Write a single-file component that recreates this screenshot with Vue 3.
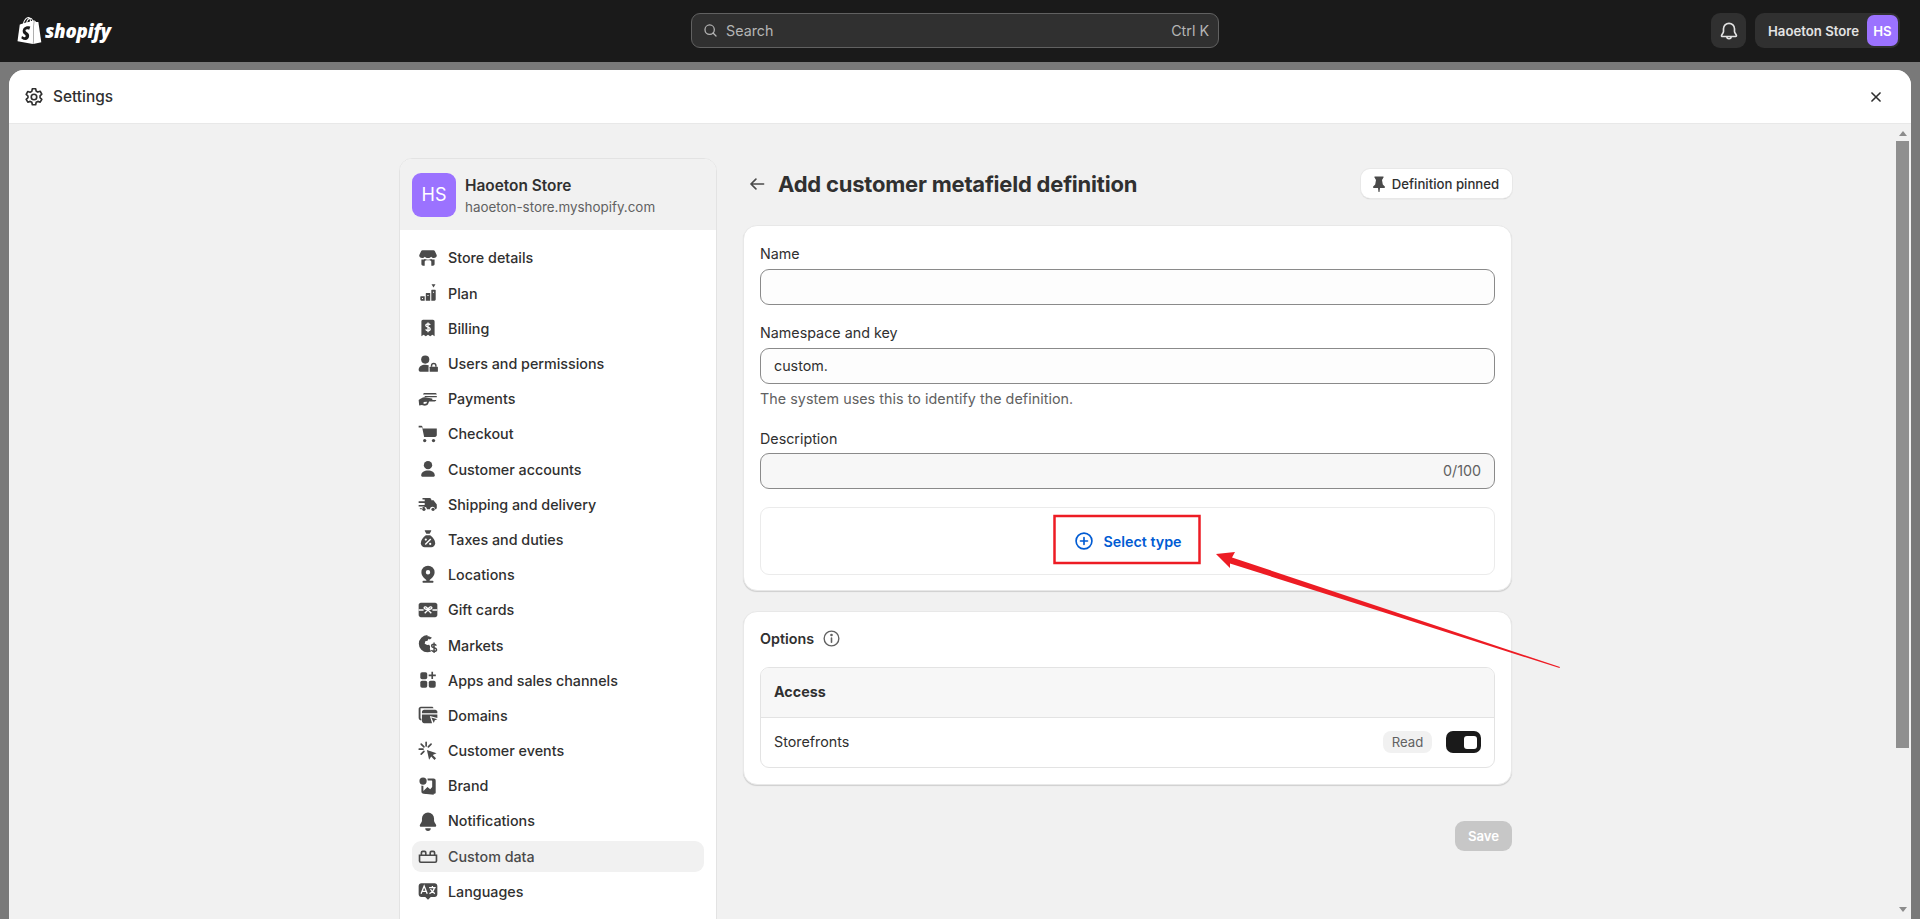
<script setup>
const navItems = [
  { label: 'Store details', icon: '<path d="M5 3h10c.6 0 1 .3 1.300.8L18 7.500c0 1.500-1.100 2.500-2.700 2.500-1 0-1.900-.5-2.400-1.200-.6.7-1.600 1.200-2.900 1.200s-2.300-.5-2.900-1.200C6.600 9.500 5.700 10 4.700 10 3.100 10 2 9 2 7.500l1.700-3.700C4 3.300 4.400 3 5 3z"/><path d="M4 11.300c1.100.3 2.300.1 3.100-.5.900.5 1.900.7 2.900.7s2-.2 2.900-.7c.8.600 2 .8 3.100.5v4.200c0 .8-.7 1.500-1.500 1.500H13v-3.500c0-.8-.7-1.500-1.500-1.500h-3c-.8 0-1.500.7-1.500 1.500V17H5.500C4.700 17 4 16.300 4 15.500z"/>' },
  { label: 'Plan', icon: '<path fill-rule="evenodd" d="M3 13.500c0-.3.200-.5.500-.5H7v4H4a1 1 0 0 1-1-1zM4.500 14.500v1h1v-1z"/><path fill-rule="evenodd" d="M8 10.500c0-.3.200-.5.500-.5H12v7H8zM9.500 11.800v1h1v-1z"/><path fill-rule="evenodd" d="M13 7.500c0-.3.200-.5.500-.5h3c.3 0 .5.200.5.500V16a1 1 0 0 1-1 1h-3zM14.500 8.800v1h1v-1z"/><path d="M13.200 2h3.600L15 5z"/>' },
  { label: 'Billing', icon: '<path d="M5.500 2.500h9c.8 0 1.500.7 1.500 1.500v13.500l-2-1.300-2 1.300-2-1.300-2 1.300-2-1.300-2 1.300V4c0-.8.700-1.500 1.500-1.500z"/><path d="M12 7.300c-.4-.7-1.100-1-2-1-1.200 0-2 .6-2 1.500 0 2 4 1 4 3.100 0 .9-.8 1.500-2 1.500-1 0-1.700-.4-2.100-1.100M10 5v8.800" fill="none" stroke="#fff" stroke-width="1.200"/>' },
  { label: 'Users and permissions', icon: '<circle cx="7.500" cy="6" r="3.700"/><path d="M1.500 15.500c0-3.300 2.700-4.800 6-4.800 1.300 0 2.400.2 3.300.7-.2.400-.3.800-.3 1.200v4.400H3a1.500 1.500 0 0 1-1.500-1.500z"/><path d="M12 12.500h6.500c.3 0 .5.200.5.500v3.500c0 .3-.2.500-.5.500H12c-.3 0-.5-.2-.5-.5V13c0-.3.200-.5.500-.5z"/><path d="M13.200 12.500v-1a2 2 0 0 1 4 0v1" fill="none" stroke="currentColor" stroke-width="1.300"/>' },
  { label: 'Payments', icon: '<path d="M7 4.500h9.500c.8 0 1.500.6 1.500 1.300H5.500C5.500 5 6.200 4.500 7 4.500z"/><path d="M7 7.200h11v1.300H12l-5-.4z"/><path d="M1.500 11c2-1.500 4-3 6-2.500l6 1c.8.200.8 1.300 0 1.400H9.500l8 .1c0 .8-.7 1.300-1.500 1.300h-5l-1 2.500c-.5 1-2.500 1.500-4 1.200l-1.500-.5-2.500.500z" /><path d="M6 12.800l3.200-.3-.7 1.700-2.500.4z" fill="#fff"/>' },
  { label: 'Checkout', icon: '<path d="M1.500 2.500h2c.8 0 1.400.5 1.500 1.200L5.200 5H18v6c0 1-.7 1.700-1.700 1.700H6.500L4.800 4.500c0-.3-.2-.4-.5-.4H1.500z"/><circle cx="7" cy="16" r="1.500"/><circle cx="15" cy="16" r="1.500"/>' },
  { label: 'Customer accounts', icon: '<circle cx="10" cy="6.500" r="3.800"/><path d="M3.800 16c0-3.300 2.800-4.700 6.200-4.700s6.200 1.400 6.200 4.700c0 .6-.4 1-1 1H4.800c-.6 0-1-.4-1-1z"/>' },
  { label: 'Shipping and delivery', icon: '<path d="M5 4.500h6.500c.8 0 1.500.7 1.500 1.500v.5h2l3 4v3c0 .8-.5 1.300-1.200 1.300h-.4a2.300 2.300 0 0 0-4.600 0h-2.800a2.300 2.300 0 0 0-4.600 0H3.500c-.5 0-1-.4-1-1H7v-1.500H1.500v-1.500H7V9H1.500V7.500H7V6H5z"/><circle cx="6.300" cy="14.800" r="1.500"/><circle cx="14.600" cy="14.800" r="1.500"/>' },
  { label: 'Taxes and duties', icon: '<path d="M7.500 2h5c.4 0 .6.400.4.800L11.500 5.300h-3L7.100 2.800c-.2-.4 0-.8.400-.8z"/><path d="M8 6.500h4c2.700 2 4.500 4.500 4.500 7.300 0 2-1.500 3.700-3.500 3.700H7c-2 0-3.500-1.700-3.500-3.700 0-2.800 1.800-5.300 4.500-7.300z"/><path d="M7.500 15l5-5" stroke="#fff" stroke-width="1.300"/><circle cx="8" cy="10.500" r="1" fill="#fff"/><circle cx="12" cy="14.500" r="1" fill="#fff"/>' },
  { label: 'Locations', icon: '<path fill-rule="evenodd" d="M10 1.500a6 6 0 0 1 6 6c0 3-2.500 5.600-4.500 7v.8h2.700c.5 0 .8.400.8.800s-.3.900-.8.900H5.800c-.5 0-.8-.4-.8-.9s.3-.8.800-.8h2.700v-.8c-2-1.400-4.500-4-4.500-7a6 6 0 0 1 6-6zm0 4a2 2 0 1 0 0 4 2 2 0 0 0 0-4z"/>' },
  { label: 'Gift cards', icon: '<path d="M3.500 3.500h13c1.100 0 2 .9 2 2v9c0 1.100-.9 2-2 2h-13c-1.100 0-2-.9-2-2v-9c0-1.100.9-2 2-2z"/><path d="M10 9.500C9 7 6.500 6.500 6.500 8c0 1.300 1.700 1.500 3.500 1.500zm0 0c1-2.500 3.500-3 3.500-1.500 0 1.300-1.700 1.500-3.500 1.500zm0 .5l-3 3m3-3l3 3M1.500 10h4.500m8 0h4.500" fill="none" stroke="#fff" stroke-width="1.200"/>' },
  { label: 'Markets', icon: '<path d="M9.500 2c1.500 0 3 .5 4.100 1.400l-1.900 1.500-1.200-.6-.9 1.800-2.100.6-.5 2.100 2.300 1.200 1.700-.2.900 1.300-.2 2.500 1.100 2.400c-1 .5-2.100.7-3.300.7a7.800 7.800 0 0 1 0-15.700z"/><path d="M17.800 7.200c-.5-.8-1.200-1.200-2.200-1.200-1.300 0-2.100.6-2.100 1.600 0 2.100 4.500 1.200 4.500 3.400 0 1-1 1.600-2.300 1.600-1.100 0-1.900-.4-2.400-1.200M15.700 4.500v9.500" transform="translate(-.2 3.300)" fill="none" stroke="currentColor" stroke-width="1.300"/>' },
  { label: 'Apps and sales channels', icon: '<rect x="3" y="3" width="6.300" height="6.300" rx="1.600"/><rect x="3" y="10.700" width="6.300" height="6.300" rx="1.600"/><rect x="10.700" y="10.700" width="6.300" height="6.300" rx="1.600"/><path d="M13.100 2.500h1.500v2.500h2.500v1.500h-2.500v2.500h-1.500V6.500h-2.500V5h2.500z"/>' },
  { label: 'Domains', icon: '<path d="M3.500 2.500h10c.8 0 1.500.6 1.500 1.300H3.200v8.700c0 .6.300 1 .8 1V15c-1.300 0-2.500-1-2.500-2.500V4.500c0-1.100.9-2 2-2z"/><path d="M6.500 5.200h10c1.100 0 2 .9 2 2v1.300H4.500V7.200c0-1.100.9-2 2-2z"/><path d="M4.500 9.500h14v3.200l-6.800-1.800 2 6.600H6.500c-1.100 0-2-.9-2-2z"/><path d="M13 12.300l5.500 1.500-2.300 1 -.9 2.400z"/>' },
  { label: 'Customer events', icon: '<path d="M9 9l8.800 3-3.500 1.700 3 3-1.400 1.400-3-3L11 18z"/><path d="M8.300 2v3.500M2 8.300h3.500M3.800 3.800l2.500 2.500M3.800 12.800l2.500-2.500M12.800 3.800l-2.500 2.500" fill="none" stroke="currentColor" stroke-width="1.500" stroke-linecap="round"/>' },
  { label: 'Brand', icon: '<circle cx="5.500" cy="5.500" r="3.300"/><path d="M9.500 3.200h5.500c1.200 0 2 .8 2 2v10.600c0 .7-.5 1.200-1.200 1.200H6c-1.200 0-2-.8-2-2V9.500c1 .3 1.300.3 1.800.3v4.800l3.700-3.700 2.500 2 1.800-2v-5.300c0-.3-.2-.5-.5-.5H9.800z" /><path d="M6.500 17l3.500-4 3 2.500 1.500-2 .7.700V18z"/>' },
  { label: 'Notifications', icon: '<path d="M10 2.200a5.500 5.500 0 0 1 5.500 5.500v2.100c0 1.500 2 3 2 4.400 0 .7-.5 1.100-1.100 1.100H3.600c-.6 0-1.100-.4-1.100-1.100 0-1.400 2-2.900 2-4.400V7.700A5.500 5.500 0 0 1 10 2.200z"/><path d="M7.500 16.500h5a2.500 2.500 0 0 1-5 0z"/>' },
  { label: 'Custom data', active: true, icon: '<path fill="none" stroke="currentColor" stroke-width="1.500" d="M2.300 9.300h15.400v5.200c0 .8-.6 1.200-1.200 1.200h-13c-.6 0-1.200-.4-1.200-1.200zM4 9.300V7c0-.7.400-1.200 1.200-1.200h1.600c.8 0 1.200.5 1.200 1.200v2.300m4 0V7c0-.7.400-1.200 1.200-1.200h1.600c.8 0 1.200.5 1.200 1.200v2.300"/>' },
  { label: 'Languages', icon: '<path d="M4 3h12c1.400 0 2.500 1.100 2.500 2.500V13c0 1.400-1.100 2.500-2.500 2.500h-3.500L10 18l-2.500-2.500H4c-1.400 0-2.500-1.100-2.500-2.500V5.500C1.500 4.100 2.600 3 4 3z"/><path d="M3.700 12.500l2.800-7 2.800 7M4.800 10.300h3.400M11 7h6M14 5.500V7m1.800 0c-.4 2.300-2.300 4.500-4.500 5.300m1-4c.7 1.800 2.200 3.300 4 4" fill="none" stroke="#fff" stroke-width="1.200"/>' }
]
</script>

<template>
  <div class="page">
    <header class="topbar">
      <div class="logo">
        <svg class="logo-bag" viewBox="0 0 24 24" fill="#fff"><path d="M15.337 23.979l7.216-1.561s-2.604-17.613-2.625-17.73c-.018-.116-.114-.192-.211-.192s-1.929-.136-1.929-.136-1.275-1.274-1.439-1.411c-.045-.037-.075-.057-.121-.074l-.914 21.104h.023zM11.71 11.305s-.81-.424-1.774-.424c-1.447 0-1.504.906-1.504 1.141 0 1.232 3.24 1.715 3.24 4.629 0 2.295-1.44 3.76-3.406 3.76-2.354 0-3.54-1.465-3.54-1.465l.646-2.086s1.245 1.066 2.28 1.066c.675 0 .975-.545.975-.932 0-1.619-2.654-1.694-2.654-4.359-.034-2.237 1.571-4.416 4.827-4.416 1.257 0 1.875.361 1.875.361l-.945 2.715-.02.01zM11.17.83c.136 0 .271.038.405.135-.984.465-2.064 1.639-2.508 3.992-.656.213-1.293.405-1.889.578C7.697 3.75 8.951.84 11.17.84V.83zm1.235 2.949v.135c-.754.232-1.583.484-2.394.736.466-1.777 1.333-2.645 2.085-2.971.193.501.309 1.176.309 2.1zm.539-2.234c.694.074 1.141.867 1.429 1.755-.349.114-.735.231-1.158.366v-.252c0-.752-.096-1.371-.271-1.871v.002zm2.992 1.289c-.02 0-.06.021-.078.021s-.289.075-.714.21c-.423-1.233-1.176-2.37-2.508-2.37h-.115C12.135.209 11.669 0 11.265 0 8.159 0 6.675 3.877 6.21 5.846c-1.194.365-2.063.636-2.16.674-.675.213-.694.232-.772.87-.075.462-1.83 14.063-1.83 14.063L15.009 24l.927-21.166z"/></svg>
        <span class="logo-word">shopify</span>
      </div>
      <div class="search">
        <svg class="search-icon" viewBox="0 0 20 20" fill="none" stroke="currentColor" stroke-width="1.500" stroke-linecap="round"><circle cx="9" cy="9" r="5.500"/><path d="M13 13l3.500 3.500"/></svg>
        <span class="search-text">Search</span>
        <span class="search-keys">Ctrl K</span>
      </div>
      <div class="top-actions">
        <button class="bell">
          <svg viewBox="0 0 20 20" fill="none" stroke="currentColor" stroke-width="1.500" stroke-linejoin="round"><path d="M10 3a5 5 0 0 1 5 5v2.500c0 1.300 1.800 2.700 1.800 3.900 0 .4-.3.600-.7.600H3.900c-.4 0-.7-.2-.7-.6 0-1.200 1.800-2.600 1.800-3.900V8a5 5 0 0 1 5-5z"/><path d="M8 15a2 2 0 0 0 4 0"/></svg>
        </button>
        <div class="store-btn">
          <span>Haoeton Store</span>
          <span class="store-avatar">HS</span>
        </div>
      </div>
    </header>

    <div class="backdrop">
      <div class="modal">
        <div class="modal-head">
          <svg class="gear" viewBox="0 0 20 20" fill="none" stroke="currentColor" stroke-width="1.500" stroke-linejoin="round"><circle cx="10" cy="10" r="2.500"/><path d="M8.500 2.500h3l.5 2.200 1.500.8 2.100-.7 1.500 2.600-1.600 1.500v1.700l1.600 1.500-1.500 2.600-2.100-.7-1.500.8-.5 2.200h-3l-.5-2.200-1.500-.8-2.100.7-1.500-2.600 1.600-1.500V9.100L2.900 7.600l1.500-2.600 2.100.7 1.500-.8z"/></svg>
          <span class="modal-title">Settings</span>
          <svg class="close" viewBox="0 0 20 20" fill="none" stroke="currentColor" stroke-width="1.800" stroke-linecap="round"><path d="M5.500 5.500l9 9M14.500 5.500l-9 9"/></svg>
        </div>
        <div class="modal-body">
          <div class="content">
            <aside class="side">
              <div class="side-head">
                <span class="side-avatar">HS</span>
                <div class="side-names">
                  <div class="side-name">Haoeton Store</div>
                  <div class="side-domain">haoeton-store.myshopify.com</div>
                </div>
              </div>
              <nav class="nav">
                <a v-for="item in navItems" :key="item.label" class="nav-row" :class="{ active: item.active }">
                  <svg class="nav-icon" viewBox="0 0 20 20" fill="currentColor" v-html="item.icon"></svg>
                  <span>{{ item.label }}</span>
                </a>
              </nav>
            </aside>

            <main class="main">
              <div class="title-row">
                <svg class="back" viewBox="0 0 20 20" fill="none" stroke="currentColor" stroke-width="1.500" stroke-linecap="round" stroke-linejoin="round"><path d="M16 10H4.500M9 5.500L4.500 10 9 14.500"/></svg>
                <h1>Add customer metafield definition</h1>
                <button class="pin">
                  <svg viewBox="0 0 20 20" fill="currentColor"><path d="M6 2.500h8c.5 0 .8.600.5 1L13 6l.8 4.500 2 2c.4.500.1 1.500-.6 1.500H11l-.5 4h-1L9 14H4.800c-.7 0-1-1-.6-1.500l2-2L7 6 5.500 3.500c-.3-.4 0-1 .5-1z"/></svg>
                  Definition pinned
                </button>
              </div>

              <section class="card form-card">
                <label class="label">Name</label>
                <div class="input"></div>
                <label class="label gap">Namespace and key</label>
                <div class="input">custom.</div>
                <div class="help">The system uses this to identify the definition.</div>
                <label class="label gap desc-label">Description</label>
                <div class="input desc"><span>0/100</span></div>
                <div class="select-box">
                  <svg viewBox="0 0 20 20" fill="none" stroke="currentColor" stroke-width="1.500" stroke-linecap="round"><circle cx="10" cy="10" r="7.200"/><path d="M10 6.800v6.400M6.800 10h6.400"/></svg>
                  <span>Select type</span>
                </div>
              </section>

              <section class="card options-card">
                <div class="options-title">
                  <span>Options</span>
                  <svg viewBox="0 0 20 20" fill="none" stroke="currentColor" stroke-width="1.300" stroke-linecap="round"><circle cx="10" cy="10" r="7"/><path d="M10 9.500v4" stroke-width="1.500"/><circle cx="10" cy="6.700" r=".6" fill="currentColor"/></svg>
                </div>
                <div class="table">
                  <div class="table-head">Access</div>
                  <div class="table-row">
                    <span>Storefronts</span>
                    <span class="read">Read</span>
                    <span class="toggle"><i></i></span>
                  </div>
                </div>
              </section>

              <div class="save-row"><button class="save">Save</button></div>
            </main>
          </div>
          <div class="scrollbar">
            <i class="arrow up"></i>
            <b class="thumb"></b>
            <i class="arrow down"></i>
          </div>
        </div>
      </div>
    </div>

    <svg class="annotation" viewBox="0 0 1920 919" fill="#ed1c24">
      <rect x="1054.500" y="516" width="145" height="47" fill="none" stroke="#ed1c24" stroke-width="2.500"/>
      <polygon points="1216,554 1235,552 1232,557.500 1560,667 1559.500,668 1230,563.500 1230,568"/>
    </svg>
  </div>
</template>

<style>
html, body { margin: 0; padding: 0; background: #1a1a1a; overflow: hidden; }
</style>

<style scoped>
.page {
  position: relative;
  height: 919px;
  display: flex;
  flex-direction: column;
  overflow: hidden;
  font-family: Inter, "Liberation Sans", sans-serif;
  font-size: 14.3px;
  color: #303030;
}
.topbar {
  height: 62px;
  flex: none;
  box-sizing: border-box;
  background: #1a1a1a;
  display: flex;
  align-items: center;
  padding: 0 20px 1px 18px;
  position: relative;
}
.logo { display: flex; align-items: center; width: 673px; gap: 2px; flex: none; }
.logo-bag { width: 27px; height: 27px; margin-left: -2px; }
.logo-word {
  color: #fff;
  font-family: "Open Sans", sans-serif;
  font-weight: 800;
  font-style: italic;
  font-size: 18.700px;
  letter-spacing: -0.3px;
  line-height: 26px;
}
.search {
  width: 528px;
  height: 35px;
  box-sizing: border-box;
  border: 1px solid #616161;
  border-radius: 9px;
  background: #303030;
  color: #b5b5b5;
  display: flex;
  align-items: center;
  padding: 0 9px 0 10px;
  font-size: 14.3px;
}
.search-icon { width: 17px; height: 17px; margin-right: 7px; }
.search-text { flex: 1; }
.top-actions { margin-left: auto; display: flex; gap: 9px; align-items: center; }
.bell {
  width: 35px;
  height: 35px;
  padding: 0;
  border: 0;
  border-radius: 9px;
  background: #303030;
  color: #e3e3e3;
  display: flex;
  align-items: center;
  justify-content: center;
}
.bell svg { width: 22px; height: 22px; }
.store-btn {
  width: 145px;
  height: 35px;
  box-sizing: border-box;
  border-radius: 9px;
  background: #303030;
  color: #e3e3e3;
  font-size: 13.2px;
  font-weight: 600;
  display: flex;
  align-items: center;
  justify-content: space-between;
  padding: 0 2px 0 13px;
}
.store-avatar {
  width: 31px;
  height: 31px;
  border-radius: 7px;
  background: #9b72ff;
  color: #fff;
  display: flex;
  align-items: center;
  justify-content: center;
  font-size: 13.2px;
}
.backdrop {
  flex: 1;
  min-height: 0;
  background: #797979;
  padding: 8px 9px 0;
  display: flex;
}
.modal {
  flex: 1;
  min-width: 0;
  background: #f1f1f1;
  border-radius: 15px 15px 0 0;
  overflow: hidden;
  display: flex;
  flex-direction: column;
}
.modal-head {
  height: 54px;
  flex: none;
  box-sizing: border-box;
  background: #fff;
  border-bottom: 1px solid #e8e8e8;
  display: flex;
  align-items: center;
  padding: 0 26px 0 14px;
}
.gear { width: 22px; height: 22px; color: #303030; margin-right: 8px; }
.modal-title { font-size: 15.400px; font-weight: 500; flex: 1; }
.close { width: 18px; height: 18px; color: #303030; }
.modal-body { flex: 1; min-height: 0; display: flex; overflow: hidden; }
.content {
  flex: 1;
  min-width: 0;
  display: flex;
  justify-content: center;
  gap: 25px;
  padding-left: 8px;
  align-items: flex-start;
}
.side {
  width: 318px;
  flex: none;
  box-sizing: border-box;
  margin-top: 34px;
  background: #fff;
  border: 1px solid #e3e3e3;
  border-radius: 13px 13px 0 0;
  overflow: hidden;
  padding-bottom: 40px;
}
.side-head {
  height: 71px;
  background: #f1f1f1;
  display: flex;
  align-items: center;
  padding: 0 12px;
  gap: 9px;
}
.side-avatar {
  width: 44px;
  height: 44px;
  border-radius: 9px;
  background: #9b72ff;
  color: #fff;
  display: flex;
  align-items: center;
  justify-content: center;
  font-size: 18px;
}
.side-names { padding-top: 5px; }
.side-name { font-size: 15.400px; font-weight: 600; line-height: 20px; color: #303030; }
.side-domain { font-size: 13.400px; color: #616161; line-height: 22px; }
.nav {
  padding: 12.600px 12px 0;
  display: flex;
  flex-direction: column;
  gap: 4.400px;
}
.nav-row {
  height: 30.800px;
  border-radius: 9px;
  display: flex;
  align-items: center;
  gap: 9px;
  padding: 0 5px;
  font-weight: 500;
  color: #303030;
}
.nav-row.active { background: #f1f1f1; color: #4a4a4a; }
.nav-icon { width: 22px; height: 22px; flex: none; color: #4a4a4a; }
.main { width: 770px; flex: none; padding-top: 45px; }
.title-row { height: 29px; display: flex; align-items: center; margin-bottom: 27px; padding-left: 4px; }
.back { width: 22px; height: 22px; color: #4a4a4a; margin-right: 10px; }
h1 { margin: 0; flex: 1; font-size: 22px; font-weight: 650; color: #303030; letter-spacing: -0.22px; }
.pin {
  width: 151px;
  height: 29px;
  padding: 0 5px 0 0;
  border: 0;
  border-radius: 9px;
  background: #fff;
  box-shadow: 0 0 0 1px #e8e8e8, 0 1px 1px #b5b5b5;
  font: inherit;
  font-size: 13.200px;
  font-weight: 500;
  color: #303030;
  display: flex;
  align-items: center;
  justify-content: center;
  gap: 3px;
}
.pin svg { width: 20px; height: 20px; color: #4a4a4a; }
.card {
  box-sizing: border-box;
  background: #fff;
  border: 1px solid #e8e8e8;
  border-radius: 14px;
  box-shadow: 0 1px 1px rgba(0, 0, 0, .14);
  width: 769px;
  margin-left: 1px;
}
.form-card { padding: 18px 16px 16px; margin-bottom: 20px; height: 366px; }
.label { display: block; height: 20px; line-height: 20px; margin-bottom: 5px; color: #303030; font-weight: 400; }
.label.gap { margin-top: 18px; }
.label.desc-label { margin-top: 20px; margin-bottom: 4px; }
.input {
  height: 36px;
  box-sizing: border-box;
  border: 1px solid #8a8a8a;
  border-radius: 9px;
  background: #fdfdfd;
  padding: 0 13px;
  line-height: 34px;
  color: #303030;
}
.help { margin-top: 5px; line-height: 20px; height: 20px; color: #616161; letter-spacing: .05px; }
.desc { background: #f7f7f7; display: flex; justify-content: flex-end; color: #616161; }
.select-box {
  margin-top: 18px;
  height: 68px;
  box-sizing: border-box;
  border: 1px solid #ebebeb;
  border-radius: 9px;
  display: flex;
  align-items: center;
  justify-content: center;
  gap: 8px;
  color: #005bd3;
  font-weight: 600;
}
.select-box svg { width: 22px; height: 22px; }
.options-card { padding: 0 16px; height: 174px; }
.options-title { height: 55px; box-sizing: border-box; padding-bottom: 2px; display: flex; align-items: center; gap: 7px; font-weight: 600; }
.options-title svg { width: 21px; height: 21px; color: #616161; }
.table { border: 1px solid #e3e3e3; border-radius: 9px; overflow: hidden; height: 101px; box-sizing: border-box; }
.table-head {
  height: 50px;
  box-sizing: border-box;
  background: #f7f7f7;
  border-bottom: 1px solid #e3e3e3;
  padding: 0 13px;
  line-height: 48px;
  font-weight: 650;
}
.table-row { height: 49px; box-sizing: border-box; display: flex; align-items: center; padding: 0 13px 2px; color: #303030; }
.table-row > span:first-child { flex: 1; }
.read {
  width: 49px;
  height: 22px;
  line-height: 22px;
  text-align: center;
  border-radius: 8px;
  background: #f1f1f1;
  color: #616161;
  font-size: 13.200px;
  margin-right: 14px;
}
.toggle {
  width: 35px;
  height: 22px;
  border-radius: 7px;
  background: #1a1a1a;
  position: relative;
}
.toggle i {
  position: absolute;
  right: 4px;
  top: 5px;
  width: 13px;
  height: 13px;
  border-radius: 3px;
  background: #fff;
}
.save-row { display: flex; justify-content: flex-end; margin-top: 36px; }
.save {
  width: 57px;
  height: 30px;
  padding: 0;
  border: 0;
  border-radius: 9px;
  background: #c7c7c7;
  color: #fff;
  font: inherit;
  font-size: 13.200px;
  font-weight: 600;
}
.scrollbar {
  width: 17px;
  flex: none;
  display: flex;
  flex-direction: column;
  align-items: center;
  padding-top: 7px;
  box-sizing: border-box;
}
.arrow { width: 0; height: 0; border-left: 4px solid transparent; border-right: 4px solid transparent; }
.arrow.up { border-bottom: 5px solid #8c8c8c; margin-bottom: 5px; }
.arrow.down { border-top: 5px solid #8c8c8c; margin-top: 159px; }
.thumb { width: 13px; height: 607px; background: #8f8f8f; flex: none; }
.annotation { position: absolute; left: 0; top: 0; width: 1920px; height: 919px; pointer-events: none; }
</style>
